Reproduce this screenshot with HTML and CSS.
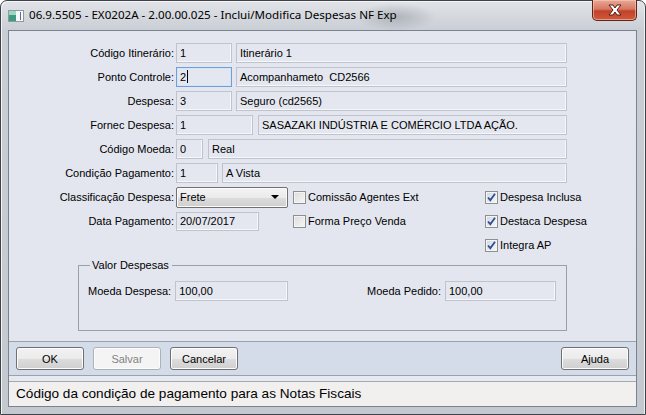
FILE: index.html
```html
<!DOCTYPE html>
<html>
  <head>
    <meta charset="utf-8" />
    <title>Inclui/Modifica Despesas NF Exp</title>
    <link rel="stylesheet" href="styles.css">
  </head>
  <body>
    <div class="window">
      <div class="titlebar">
        <svg class="app-icon" width="16" height="12" viewBox="0 0 16 12">
          <rect x="0.5" y="0.5" width="15" height="11" fill="#f7f9fa" stroke="#8d9aa4" />
          <rect x="1" y="1" width="7" height="10" fill="#3f9a80" />
          <rect x="1" y="1" width="7" height="4" fill="#9fd6c0" />
          <rect x="12" y="2" width="1" height="8" fill="#5a6f86" />
        </svg>
        <span class="title">06.9.5505 - EX0202A - 2.00.00.025 - Inclui/Modifica Despesas NF Exp</span>
        <button class="close" aria-label="Fechar">
          <svg width="16" height="12" viewBox="0 0 16 12">
            <path d="M2 1 L6 1 L8 4 L10 1 L14 1 L10 6 L14 11 L10 11 L8 8 L6 11 L2 11 L6 6 Z"
                  fill="#fff" stroke="#5b1b10" stroke-width="1" stroke-linejoin="round" />
          </svg>
        </button>
      </div>

      <div class="client">
        <div class="panel">
          <div class="row">
            <label class="lbl">Código Itinerário:</label>
            <span class="field w56">1</span>
            <span class="field grow">Itinerário 1</span>
          </div>
          <div class="row">
            <label class="lbl">Ponto Controle:</label>
            <span class="field w56 focus">2<i class="caret"></i></span>
            <span class="field grow">Acompanhameto&nbsp; CD2566</span>
          </div>
          <div class="row">
            <label class="lbl">Despesa:</label>
            <span class="field w56">3</span>
            <span class="field grow">Seguro (cd2565)</span>
          </div>
          <div class="row">
            <label class="lbl">Fornec Despesa:</label>
            <span class="field w77">1</span>
            <span class="field grow gap5">SASAZAKI INDÚSTRIA E COMÉRCIO LTDA AÇÃO.</span>
          </div>
          <div class="row">
            <label class="lbl">Código Moeda:</label>
            <span class="field w27">0</span>
            <span class="field grow gap5">Real</span>
          </div>
          <div class="row">
            <label class="lbl">Condição Pagamento:</label>
            <span class="field w42">1</span>
            <span class="field grow">A Vista</span>
          </div>

          <div class="row">
            <label class="lbl">Classificação Despesa:</label>
            <div class="ctl">
              <span class="combo">Frete<i class="arrow"></i></span>
            </div>
            <div class="mid"><span class="check"></span>Comissão Agentes Ext</div>
            <div class="right"><span class="check on"></span>Despesa Inclusa</div>
          </div>
          <div class="row">
            <label class="lbl">Data Pagamento:</label>
            <div class="ctl">
              <span class="field w83">20/07/2017</span>
            </div>
            <div class="mid"><span class="check"></span>Forma Preço Venda</div>
            <div class="right"><span class="check on"></span>Destaca Despesa</div>
          </div>
          <div class="row">
            <span class="lbl"></span>
            <div class="ctl"></div>
            <div class="mid"></div>
            <div class="right"><span class="check on"></span>Integra AP</div>
          </div>

          <fieldset class="group">
            <legend>Valor Despesas</legend>
            <div class="group-row">
              <label>Moeda Despesa:</label>
              <span class="field w113">100,00</span>
            </div>
            <div class="group-row">
              <label>Moeda Pedido:</label>
              <span class="field w111">100,00</span>
            </div>
          </fieldset>
        </div>

        <div class="buttonbar">
          <button class="btn">OK</button>
          <button class="btn" disabled>Salvar</button>
          <button class="btn">Cancelar</button>
          <button class="btn push-right">Ajuda</button>
        </div>
        <div class="stripe"></div>
        <div class="status">Código da condição de pagamento para as Notas Fiscais</div>
      </div>
    </div>
  </body>
</html>
```

FILE: styles.css
```css
* {
  box-sizing: border-box;
}

body {
  margin: 0;
  background: #fff;
  font-family: 'Liberation Sans', Arial, sans-serif;
  font-size: 11px;
  color: #000;
}

.window {
  width: 646px;
  height: 415px;
  border: 1px solid #3f4349;
  border-radius: 7px 7px 0 0;
  padding: 0 8px 7px 7px;
  display: flex;
  flex-direction: column;
  background:
    radial-gradient(ellipse 40px 14px at 395px 16px, rgba(90, 95, 105, 0.3), transparent),
    linear-gradient(#e1e3e7, #c9ced5 30px, #c4c9d0);
  box-shadow: inset 1px 1px 0 #f4f5f7, inset -1px 0 0 #eef0f2;
}

/* title bar */
.titlebar {
  height: 29px;
  display: flex;
  align-items: flex-start;
}

.app-icon {
  margin: 9px 0 0 0;
}

.title {
  font-family: 'Noto Sans', 'Open Sans', sans-serif;
  font-size: 11.6px;
  margin: 6px 0 0 5px;
  color: #000;
  white-space: nowrap;
}

.close {
  margin: -1px 0 0 auto;
  width: 45px;
  height: 21px;
  border: 1px solid #5e2417;
  border-top: none;
  border-radius: 0 0 5px 5px;
  background: linear-gradient(#e9a796, #d57a62 45%, #c1412a 55%, #cf5a3c);
  box-shadow: inset 0 0 0 1px rgba(255, 210, 195, 0.55);
  display: flex;
  align-items: center;
  justify-content: center;
  padding: 0;
}

/* client area */
.client {
  flex: 1;
  border: 1px solid #7a838f;
  display: flex;
  flex-direction: column;
  background: #e3e6ef;
}

.panel {
  height: 310px;
  padding: 12px 0 0 0;
  display: flex;
  flex-direction: column;
  gap: 4px;
}

.row {
  display: flex;
  align-items: center;
  height: 20px;
}

.lbl {
  width: 165px;
  text-align: right;
  margin-right: 2px;
  flex: none;
}

.field {
  display: block;
  height: 20px;
  line-height: 18px;
  padding: 0 3px;
  border: 1px solid #bfc3cb;
  box-shadow: inset -1px -1px 0 #f6f7fa;
  background: #e4e7ef;
  white-space: nowrap;
  flex: none;
  margin-right: 4px;
}

.w27 { width: 27px; }
.w42 { width: 42px; }
.w56 { width: 56px; }
.w77 { width: 77px; }
.w83 { width: 83px; height: 19px; line-height: 17px; }
.w111 { width: 111px; }
.w113 { width: 113px; }

.gap5 { margin-left: 1px; }

/* right edge of the text fields sits at x=567 */
.row > .field.grow {
  margin-right: 0;
  width: calc(567px - 9px - 167px - var(--lead, 60px));
}
.row > .w56 + .field.grow { --lead: 60px; }
.row > .w77 + .field.grow { --lead: 82px; }
.row > .w27 + .field.grow { --lead: 32px; }
.row > .w42 + .field.grow { --lead: 46px; }

.field.focus {
  border-color: #6f9fd6;
  box-shadow: inset 0 0 0 1px #d6e5f5;
}

.caret {
  display: inline-block;
  width: 1px;
  height: 13px;
  background: #000;
  vertical-align: -2px;
  margin-left: 1px;
}

.ctl {
  width: 117px;
  flex: none;
}

.combo {
  display: flex;
  align-items: center;
  width: 112px;
  height: 21px;
  padding: 0 3px;
  border: 1px solid #707070;
  border-radius: 2px;
  background: linear-gradient(#f4f4f4, #ebebeb 50%, #dddddd 51%, #cfcfcf);
  box-shadow: inset 0 0 0 1px #fbfbfb;
}

.arrow {
  margin-left: auto;
  margin-right: 5px;
  width: 0;
  height: 0;
  border-left: 4px solid transparent;
  border-right: 4px solid transparent;
  border-top: 4px solid #000;
}

.mid {
  width: 192px;
  flex: none;
  display: flex;
  align-items: center;
}

.right {
  display: flex;
  align-items: center;
}

.check {
  width: 13px;
  height: 13px;
  margin-right: 2px;
  border: 1px solid #8e8f8f;
  background: linear-gradient(135deg, #dcdcdc, #f7f7f7);
  box-shadow: inset 0 0 0 1px #f4f4f4;
  flex: none;
}

.check.on {
  background:
    url("data:image/svg+xml;utf8,<svg xmlns='http://www.w3.org/2000/svg' width='11' height='11' viewBox='0 0 11 11'><path d='M2 5.5 L4.3 8.2 L9 1.8' fill='none' stroke='%232f4f8f' stroke-width='1.8'/></svg>") center / 11px 11px no-repeat,
    linear-gradient(135deg, #cfd8e4, #f6f8fb);
}

/* Valor Despesas group */
.group {
  margin: 0 0 0 69px;
  width: 489px;
  height: 72px;
  border: 1px solid #9aa0a8;
  border-radius: 0;
  padding: 10px 10px 0 9px;
  display: flex;
  justify-content: space-between;
  align-items: flex-start;
}

.group legend {
  padding: 0 3px 0 2px;
  margin-left: 2px;
}

.group-row {
  display: flex;
  align-items: center;
  gap: 4px;
}

.group-row .field {
  margin-right: 0;
}

/* buttons */
.buttonbar {
  height: 35px;
  border-top: 1px solid #9aa2ae;
  border-bottom: 1px solid #9aa2ae;
  background: #d4dcea;
  display: flex;
  align-items: center;
  gap: 9px;
  padding: 0 7px;
}

.btn {
  font: inherit;
  width: 68px;
  height: 23px;
  border: 1px solid #707070;
  border-radius: 3px;
  background: linear-gradient(#f2f2f2, #ebebeb 50%, #dddddd 51%, #cfcfcf);
  box-shadow: inset 0 0 0 1px #fcfcfc;
  color: #000;
  padding: 0;
}

.btn:disabled {
  border-color: #adb2b5;
  background: #f4f4f4;
  color: #838383;
}

.push-right {
  margin-left: auto;
}

.stripe {
  height: 6px;
  border-bottom: 1px solid #a3a9b1;
  background: #e6e9ef;
}

.status {
  flex: 1;
  background: #f1f0ef;
  font-size: 13.6px;
  padding: 4px 0 0 7px;
  white-space: nowrap;
}
```
